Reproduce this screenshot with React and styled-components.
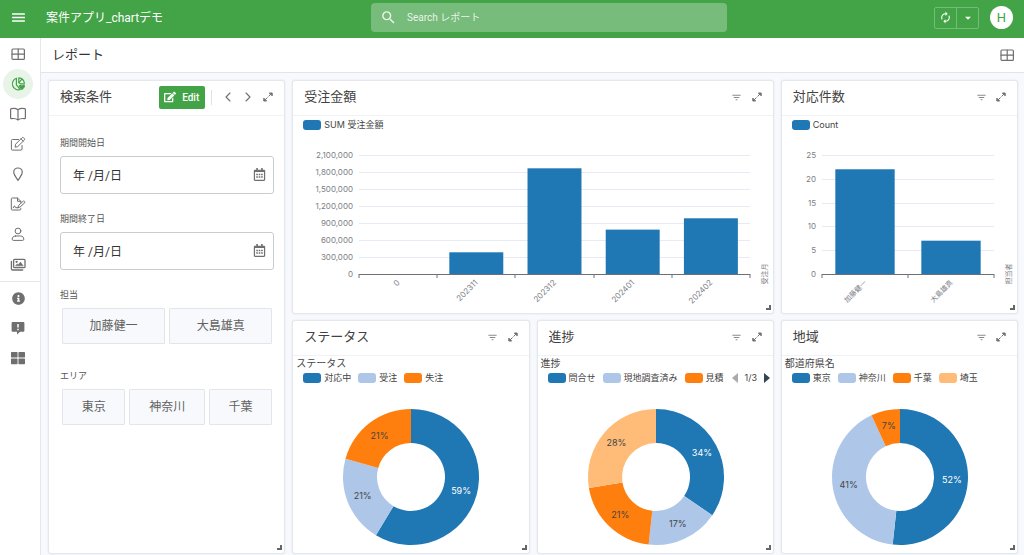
import React, { useLayoutEffect, useRef, useState } from "react";
import styled, { createGlobalStyle, css } from "styled-components";
import { MdMenu, MdSearch, MdAutorenew, MdArrowDropDown, MdFilterList } from "react-icons/md";
import { FaEdit, FaInfoCircle, FaRegCalendarAlt, FaThLarge } from "react-icons/fa";

const color = {
  green: "#43a347",
  ink: "#424242",
  text: "#555555",
  icon: "#6f6f6f",
  line: "#e4e8ed",
  page: "#f7f9fc",
  blue: "#1f77b4",
  sky: "#aec7e8",
  orange: "#ff7f0e",
  peach: "#ffbb78",
};

const uiFont = `Roboto, "Noto Sans CJK JP", sans-serif`;
const chartFont = `Inter, "Noto Sans CJK JP", sans-serif`;

const GlobalStyle = createGlobalStyle`
  *, *::before, *::after { box-sizing: border-box; }
  body {
    margin: 0;
    background: ${color.page};
    color: ${color.ink};
    font-family: ${uiFont};
    font-size: 12px;
  }
  button, input { font-family: inherit; margin: 0; }
  h1, h2, h3, p { margin: 0; font-weight: 400; }
`;

/* ---------- shell ---------- */

const Page = styled.div`
  display: flex;
  flex-direction: column;
  min-height: 100vh;
`;

const TopBar = styled.header`
  display: grid;
  grid-template-columns: 25fr 24fr 20fr;
  height: 38px;
  padding-bottom: 3px;
  align-items: center;
  background: ${color.green};
  color: #fff;
`;

const Brand = styled.div`
  display: flex;
  align-items: center;
  gap: 19px;
  padding-left: 10px;
`;

const AppName = styled.h1`
  font-size: 12px;
  line-height: 18px;
  white-space: nowrap;
`;

const IconButton = styled.button`
  display: inline-flex;
  align-items: center;
  justify-content: center;
  width: ${(p) => p.$w || 20}px;
  height: 20px;
  padding: 0;
  border: 0;
  background: none;
  color: ${(p) => p.$color || color.icon};
  cursor: pointer;
`;

const SearchBox = styled.label`
  display: flex;
  align-items: center;
  gap: 10px;
  height: 29px;
  padding: 0 9px;
  border-radius: 4px;
  background: rgba(255, 255, 255, 0.28);
  color: rgba(255, 255, 255, 0.85);

  input {
    flex: 1;
    min-width: 0;
    border: 0;
    outline: 0;
    padding: 0;
    background: none;
    color: #fff;
    font-size: 10px;
  }
  input::placeholder { color: rgba(255, 255, 255, 0.85); opacity: 1; }
`;

const Account = styled.div`
  display: flex;
  align-items: center;
  justify-content: flex-end;
  gap: 11px;
  padding-right: 11px;
`;

const SplitButton = styled.div`
  display: flex;
  border: 1px solid #74bd77;
  border-radius: 2px;

  button + button { border-left: 1px solid #74bd77; }
`;

const Avatar = styled.button`
  width: 23px;
  height: 23px;
  padding: 0;
  border: 0;
  border-radius: 50%;
  background: #fff;
  color: ${color.green};
  font-size: 13px;
  line-height: 23px;
`;

const Body = styled.div`
  display: flex;
  flex: 1;
`;

const Rail = styled.nav`
  flex: 0 0 41px;
  padding: 1px 0 0 3px;
  border-right: 1px solid ${color.line};
  background: #fff;
`;

const RailGroup = styled.div`
  display: flex;
  flex-direction: column;

  & + & {
    margin: 2px 0 0 -3px;
    padding: 1px 0 0 3px;
    border-top: 1px solid ${color.line};
  }
`;

const RailLink = styled.a`
  display: flex;
  align-items: center;
  justify-content: center;
  width: 30px;
  height: 30px;
  border-radius: 50%;
  color: ${color.icon};
  ${(p) =>
    p.$active &&
    css`
      background: #e8f4e8;
      color: ${color.green};
    `}
`;

const Main = styled.main`
  flex: 1;
  min-width: 0;
`;

const PageBar = styled.div`
  display: flex;
  align-items: center;
  justify-content: space-between;
  height: 35px;
  padding: 0 7px 0 11px;
  border-bottom: 1px solid #dfe5eb;
  background: #fff;
`;

const PageTitle = styled.h2`
  color: #333;
  font-size: 13px;
  line-height: 20px;
`;

const Board = styled.div`
  display: grid;
  grid-template-columns: repeat(4, minmax(0, 1fr));
  grid-auto-rows: minmax(234px, auto);
  gap: 6px 7px;
  padding: 7px 6px 1px 7px;
`;

/* ---------- cards ---------- */

const CardBox = styled.section`
  position: relative;
  display: flex;
  flex-direction: column;
  grid-column: span ${(p) => p.$cols || 1};
  grid-row: span ${(p) => p.$rows || 1};
  border: 1px solid ${color.line};
  border-radius: 3px;
  background: #fff;
  box-shadow: 0 0 2px rgba(60, 80, 110, 0.12);
`;

const CardHead = styled.div`
  display: flex;
  align-items: center;
  height: 35px;
  padding: 0 6px 2px 11px;
  border-bottom: 1px solid #f0f2f6;
`;

const CardTitle = styled.h3`
  flex: 1;
  color: ${color.ink};
  font-size: 13px;
  line-height: 20px;
  white-space: nowrap;
`;

const Grip = styled.span`
  position: absolute;
  right: 2px;
  bottom: 3px;
  width: 5px;
  height: 5px;
  border: solid #666;
  border-width: 0 2px 2px 0;
`;

const EditButton = styled.button`
  display: flex;
  align-items: center;
  gap: 6px;
  height: 23px;
  padding: 0 6px 0 5px;
  border: 0;
  border-radius: 2px;
  background: ${color.green};
  color: #fff;
  font-size: 10px;
  font-weight: 500;
  cursor: pointer;
`;

const Divider = styled.span`
  width: 1px;
  height: 15px;
  margin: 0 6px;
  background: #dde2e8;
`;

/* ---------- search form ---------- */

const Form = styled.form`
  display: flex;
  flex-direction: column;
  gap: 18px;
  padding: 20px 10px 0 11px;
`;

const Field = styled.div`
  display: flex;
  flex-direction: column;
  gap: 6px;
`;

const FieldLabel = styled.label`
  color: ${color.text};
  font-size: 9px;
  line-height: 14px;
`;

const DateBox = styled.div`
  display: flex;
  align-items: center;
  height: 38px;
  padding: 0 4px 2px 12px;
  border: 1px solid #c9cccf;
  border-radius: 3px;

  input {
    flex: 1;
    min-width: 0;
    padding: 0;
    border: 0;
    outline: 0;
    background: none;
    color: #333;
    font-size: 12px;
  }
`;

const Choices = styled.div`
  display: flex;
  gap: 4px;
  padding: 0 2px 7px;
`;

const Choice = styled.button`
  flex: 1 1 auto;
  height: 36px;
  padding: 0 0 4px;
  border: 1px solid #e2e6eb;
  border-radius: 1px;
  background: #f7f9fc;
  color: #616161;
  font-size: 12px;
  cursor: pointer;
`;

/* ---------- charts ---------- */

const Legend = styled.ul`
  display: flex;
  align-items: center;
  gap: 7px;
  height: 14px;
  margin: ${(p) => (p.$first ? "2px" : "0")} 0 0;
  padding: 0 0 0 10px;
  list-style: none;
  font-family: ${chartFont};
  font-size: 9px;
  line-height: 14px;
  color: #444;
  white-space: nowrap;
`;

const LegendItem = styled.li`
  display: flex;
  align-items: center;
  gap: 3px;

  &::before {
    content: "";
    width: 18px;
    height: 10px;
    border-radius: 3px;
    background: ${(p) => p.$color};
  }
`;

const Pager = styled.li`
  display: flex;
  align-items: center;
  gap: 6px;

  button {
    width: 8px;
    height: 12px;
    padding: 0;
    border: 0;
    background: none;
    line-height: 0;
  }
`;

const SeriesTitle = styled.p`
  padding: 1px 0 0 3px;
  color: #464646;
  font-size: 10px;
  line-height: 14px;
`;

const Plot = styled.svg`
  display: block;
  width: 100%;
  font-family: ${chartFont};
`;

const Ticks = styled.g`
  fill: #7c7e86;
  font-size: ${(p) => p.$size || 8}px;
`;

const SliceText = styled.text`
  fill: ${(p) => (p.$light ? "#fff" : "#444")};
  font-size: 9px;
  text-anchor: middle;
`;

function useWidth(initial) {
  const ref = useRef(null);
  const [width, setWidth] = useState(initial);
  useLayoutEffect(() => {
    const read = () => setWidth(Math.round(ref.current.getBoundingClientRect().width));
    read();
    const watcher = new ResizeObserver(read);
    watcher.observe(ref.current);
    return () => watcher.disconnect();
  }, []);
  return [ref, width];
}

function BarChart({ data, max, step, left, unit, labelSize }) {
  const [ref, width] = useWidth(480);
  const top = 23;
  const base = 142;
  const right = width - 23;
  const band = (right - left) / data.length;
  const y = (v) => Math.round(base - (v / max) * (base - top));
  const steps = Array.from({ length: max / step + 1 }, (_, i) => i * step);
  return (
    <Plot ref={ref} height={180} role="img" aria-label={unit}>
      {steps.slice(1).map((v) => (
        <line key={v} x1={left} x2={right} y1={y(v) + 0.5} y2={y(v) + 0.5} stroke="#e6eaf2" />
      ))}
      {data.map(([name, v], i) => (
        <rect
          key={name}
          x={left + band * (i + 0.155)}
          y={base - (v / max) * (base - top)}
          width={band * 0.69}
          height={(v / max) * (base - top)}
          fill={color.blue}
        />
      ))}
      <path
        d={
          `M${left} ${base + 0.5}H${right}` +
          Array.from({ length: data.length + 1 }, (_, i) => `M${Math.round(left + band * i)} ${base}v4`).join("")
        }
        stroke="#6e7079"
        fill="none"
      />
      <Ticks textAnchor="end">
        {steps.map((v) => (
          <text key={v} x={left - 6} y={y(v) + 3}>
            {v.toLocaleString("en-US")}
          </text>
        ))}
      </Ticks>
      <Ticks textAnchor="end" $size={labelSize}>
        {data.map(([name], i) => {
          const x = left + band * (i + 0.5);
          return (
            <text key={name} x={x} y={base + 10} transform={`rotate(-45 ${x} ${base + 7})`}>
              {name}
            </text>
          );
        })}
      </Ticks>
      <Ticks textAnchor="middle" $size={7}>
        <text transform={`translate(${width - 6} ${base}) rotate(-90)`}>{unit}</text>
      </Ticks>
    </Plot>
  );
}

function Donut({ slices, label }) {
  const [ref, width] = useWidth(235);
  const cx = Math.round(width / 2);
  const cy = 92;
  const outer = 68;
  const inner = 34;
  const total = slices.reduce((sum, s) => sum + s.value, 0);
  const at = (r, turn) => {
    const a = turn * Math.PI * 2;
    return [cx + r * Math.sin(a), cy - r * Math.cos(a)];
  };
  let from = 0;
  return (
    <Plot ref={ref} height={166} role="img" aria-label={label}>
      {slices.map((s) => {
        const start = from / total;
        from += s.value;
        const end = from / total;
        const big = end - start > 0.5 ? 1 : 0;
        const [tx, ty] = at(52, (start + end) / 2);
        return (
          <g key={s.color}>
            <path
              fill={s.color}
              d={`M${at(outer, start)} A${outer} ${outer} 0 ${big} 1 ${at(outer, end)} L${at(inner, end)} A${inner} ${inner} 0 ${big} 0 ${at(inner, start)} Z`}
            />
            <SliceText x={tx} y={ty + 3} $light={s.color === color.blue}>
              {Math.round((s.value / total) * 100)}%
            </SliceText>
          </g>
        );
      })}
    </Plot>
  );
}

/* ---------- icons ---------- */

const Icon = ({ size = 16, children, width = 1.2 }) => (
  <svg
    width={size}
    height={size}
    viewBox="0 0 16 16"
    fill="none"
    stroke="currentColor"
    strokeWidth={width}
    strokeLinecap="round"
    strokeLinejoin="round"
    aria-hidden="true"
  >
    {children}
  </svg>
);

const TableIcon = () => (
  <Icon>
    <rect x="2" y="3" width="12.4" height="10.4" rx="1" />
    <path d="M8.2 3v10.4M2 8.2h12.4" />
  </Icon>
);

const PieIcon = () => (
  <Icon width={1.2}>
    <path d="M6.400 2.200a5.900 5.900 0 1 0 3.900 11.300L6.400 8.900z" />
    <path d="M8.800 1.900v4.700l2 1.300h3.600c.2-3-2.300-6-5.600-6z" />
    <path d="M8.800 6.600l3.200-3.400" />
    <path d="M12 14.200L9.300 11.300c-1.300-1.700.9-3.400 2.700-1.800 1.800-1.600 3.900.1 2.700 1.800z" fill="currentColor" stroke="none" />
  </Icon>
);

const BookIcon = () => (
  <Icon>
    <path d="M8 3.700C6.300 2.400 3.500 2.200 1.400 2.600c-.5.1-.8.4-.8.9v8.300c0 .6.500.9 1 .8 2.200-.3 4.700 0 6.400 1.300 1.700-1.300 4.200-1.600 6.400-1.300.5.100 1-.2 1-.8V3.500c0-.5-.3-.8-.8-.9C12.500 2.200 9.700 2.400 8 3.700zM8 3.700v10" />
  </Icon>
);

const PencilBoxIcon = () => (
  <Icon width={1}>
    <path d="M8.500 3.500H2.400c-.6 0-1 .4-1 1v8.600c0 .6.400 1 1 1H11c.6 0 1-.4 1-1V9.500" />
    <path d="M5.200 10.800l.4-2.600 6.500-6.500c.4-.4 1-.4 1.400 0l.9.900c.4.4.4 1 0 1.400l-6.500 6.400zM11 2.900l2.300 2.300" />
  </Icon>
);

const PinIcon = () => (
  <Icon>
    <path d="M8 14.400C6.300 11.500 3.700 8.900 3.700 6.300a4.300 4.300 0 0 1 8.600 0c0 2.600-2.600 5.200-4.300 8.100z" />
  </Icon>
);

const SignIcon = () => (
  <Icon width={1}>
    <path d="M10.800 12.500v.6c0 .5-.3.900-.9.900H2.200c-.5 0-.9-.4-.9-.9V2.900c0-.5.400-.9.900-.9h5.300l3.300 3.300v1.200M7.500 2v3.300h3.300" />
    <path d="M3.200 11.800l1.300-2 1 1.900H8l.6-2.300 4.800-4.300c.5-.4 1.900.9 1.500 1.500l-4.800 4.400-2.100.8" />
  </Icon>
);

const UserIcon = () => (
  <Icon width={1}>
    <circle cx="8" cy="5" r="2.900" />
    <path d="M5.400 10h5.200c2 0 3.200 1.300 3.200 3.200 0 .8-.4 1.200-1.100 1.200H3.300c-.7 0-1.100-.4-1.100-1.200 0-1.900 1.200-3.200 3.200-3.200z" />
  </Icon>
);

const ImagesIcon = () => (
  <Icon width={1.3}>
    <rect x="3.600" y="3.300" width="11.400" height="8.400" rx="1" />
    <path d="M1.400 5.500v7.200c0 .8.500 1.300 1.300 1.300h10" />
    <path d="M5.600 9.700l1.600-1.800 1 .9 2.300-2.700 2.600 3.600z" fill="currentColor" strokeWidth=".5" />
    <circle cx="6.600" cy="5.800" r=".5" fill="currentColor" />
  </Icon>
);

const NoticeIcon = () => (
  <svg width="16" height="16" viewBox="0 0 16 16" aria-hidden="true">
    <path
      fill="currentColor"
      d="M2.900 2h10.200c.8 0 1.300.5 1.300 1.300v7.200c0 .8-.5 1.300-1.300 1.300H10L7 14.400v-2.600H2.900c-.8 0-1.300-.5-1.300-1.300V3.300C1.600 2.500 2.100 2 2.900 2z"
    />
    <path d="M8 4v3.500M8 8.800v1.400" stroke="#fff" strokeWidth="1.500" />
  </svg>
);

const ExpandIcon = () => (
  <Icon width={1}>
    <path d="M4.600 11.400l2.600-2.600M8.800 7.200l2.600-2.600" />
    <path d="M9.700 4h2.500v2.500zM3.800 9.500V12h2.500z" fill="currentColor" />
  </Icon>
);

const ChevronIcon = ({ back }) => (
  <Icon width={1.1}>
    <path d={back ? "M10 4L6 8l4 4" : "M6 4l4 4-4 4"} />
  </Icon>
);

/* ---------- composed parts ---------- */

function ChartCard({ title, cols, children }) {
  return (
    <CardBox $cols={cols}>
      <CardHead>
        <CardTitle>{title}</CardTitle>
        <IconButton type="button" aria-label="フィルター" $color="#8a8a8a">
          <MdFilterList size={11} />
        </IconButton>
        <IconButton type="button" aria-label="拡大">
          <ExpandIcon />
        </IconButton>
      </CardHead>
      {children}
      <Grip />
    </CardBox>
  );
}

function PieCard({ title, series, names, pager, slices }) {
  return (
    <ChartCard title={title}>
      <SeriesTitle>{series}</SeriesTitle>
      <Legend>
        {names.map(([name, c]) => (
          <LegendItem key={name} $color={c}>
            {name}
          </LegendItem>
        ))}
        {pager && (
          <Pager>
            <button type="button" aria-label="前へ">
              <svg width="8" height="12"><path d="M7 1v10L1 6z" fill="#aaa" /></svg>
            </button>
            {pager}
            <button type="button" aria-label="次へ">
              <svg width="8" height="12"><path d="M1 1v10l6-5z" fill="#2f4554" /></svg>
            </button>
          </Pager>
        )}
      </Legend>
      <Donut slices={slices} label={series} />
    </ChartCard>
  );
}

function DateField({ id, label }) {
  return (
    <Field>
      <FieldLabel htmlFor={id}>{label}</FieldLabel>
      <DateBox>
        <input id={id} type="text" defaultValue="年 /月/日" />
        <IconButton type="button" aria-label="カレンダー">
          <FaRegCalendarAlt size={13} />
        </IconButton>
      </DateBox>
    </Field>
  );
}

function ChoiceField({ label, options }) {
  return (
    <Field role="group" aria-label={label}>
      <FieldLabel as="span">{label}</FieldLabel>
      <Choices>
        {options.map((o) => (
          <Choice key={o} type="button">
            {o}
          </Choice>
        ))}
      </Choices>
    </Field>
  );
}

const railTop = [
  ["一覧", TableIcon],
  ["レポート", PieIcon],
  ["ブック", BookIcon],
  ["編集", PencilBoxIcon],
  ["地図", PinIcon],
  ["署名", SignIcon],
  ["ユーザー", UserIcon],
  ["画像", ImagesIcon],
];
const railBottom = [
  ["情報", () => <FaInfoCircle size={13} />],
  ["お知らせ", NoticeIcon],
  ["アプリ", () => <FaThLarge size={14} />],
];

export default function App() {
  return (
    <Page>
      <GlobalStyle />
      <TopBar>
        <Brand>
          <IconButton type="button" aria-label="メニュー" $color="#fff" $w={17}>
            <MdMenu size={17} />
          </IconButton>
          <AppName>案件アプリ_chartデモ</AppName>
        </Brand>
        <SearchBox>
          <MdSearch size={17} />
          <input type="search" placeholder="Search レポート" aria-label="Search レポート" />
        </SearchBox>
        <Account>
          <SplitButton>
            <IconButton type="button" aria-label="更新" $color="#fff" $w={21}>
              <MdAutorenew size={13} />
            </IconButton>
            <IconButton type="button" aria-label="その他" $color="#fff" $w={22}>
              <MdArrowDropDown size={14} />
            </IconButton>
          </SplitButton>
          <Avatar type="button">H</Avatar>
        </Account>
      </TopBar>
      <Body>
        <Rail>
          {[railTop, railBottom].map((group, g) => (
            <RailGroup key={g}>
              {group.map(([name, Glyph]) => (
                <RailLink key={name} href="#" aria-label={name} $active={name === "レポート"}>
                  <Glyph />
                </RailLink>
              ))}
            </RailGroup>
          ))}
        </Rail>
        <Main>
          <PageBar>
            <PageTitle>レポート</PageTitle>
            <IconButton type="button" aria-label="レイアウト">
              <TableIcon />
            </IconButton>
          </PageBar>
          <Board>
            <CardBox $rows={2}>
              <CardHead>
                <CardTitle>検索条件</CardTitle>
                <EditButton type="button">
                  <FaEdit size={12} />
                  Edit
                </EditButton>
                <Divider />
                <IconButton type="button" aria-label="前へ">
                  <ChevronIcon back />
                </IconButton>
                <IconButton type="button" aria-label="次へ">
                  <ChevronIcon />
                </IconButton>
                <IconButton type="button" aria-label="拡大">
                  <ExpandIcon />
                </IconButton>
              </CardHead>
              <Form onSubmit={(e) => e.preventDefault()}>
                <DateField id="start" label="期間開始日" />
                <DateField id="end" label="期間終了日" />
                <ChoiceField label="担当" options={["加藤健一", "大島雄真"]} />
                <ChoiceField label="エリア" options={["東京", "神奈川", "千葉"]} />
              </Form>
              <Grip />
            </CardBox>

            <ChartCard title="受注金額" cols={2}>
              <Legend $first>
                <LegendItem $color={color.blue}>SUM 受注金額</LegendItem>
              </Legend>
              <BarChart
                max={2100000}
                step={300000}
                left={66}
                unit="受注月"
                data={[
                  ["0", 0],
                  ["202311", 383000],
                  ["202312", 1865000],
                  ["202401", 783000],
                  ["202402", 983000],
                ]}
              />
            </ChartCard>

            <ChartCard title="対応件数">
              <Legend $first>
                <LegendItem $color={color.blue}>Count</LegendItem>
              </Legend>
              <BarChart
                max={25}
                step={5}
                left={40}
                unit="担当者"
                labelSize={7}
                data={[
                  ["加藤健一", 22],
                  ["大島雄真", 7],
                ]}
              />
            </ChartCard>

            <PieCard
              title="ステータス"
              series="ステータス"
              names={[
                ["対応中", color.blue],
                ["受注", color.sky],
                ["失注", color.orange],
              ]}
              slices={[
                { value: 17, color: color.blue },
                { value: 6, color: color.sky },
                { value: 6, color: color.orange },
              ]}
            />
            <PieCard
              title="進捗"
              series="進捗"
              pager="1/3"
              names={[
                ["問合せ", color.blue],
                ["現地調査済み", color.sky],
                ["見積", color.orange],
              ]}
              slices={[
                { value: 10, color: color.blue },
                { value: 5, color: color.sky },
                { value: 6, color: color.orange },
                { value: 8, color: color.peach },
              ]}
            />
            <PieCard
              title="地域"
              series="都道府県名"
              names={[
                ["東京", color.blue],
                ["神奈川", color.sky],
                ["千葉", color.orange],
                ["埼玉", color.peach],
              ]}
              slices={[
                { value: 15, color: color.blue },
                { value: 12, color: color.sky },
                { value: 2, color: color.orange },
              ]}
            />
          </Board>
        </Main>
      </Body>
    </Page>
  );
}
